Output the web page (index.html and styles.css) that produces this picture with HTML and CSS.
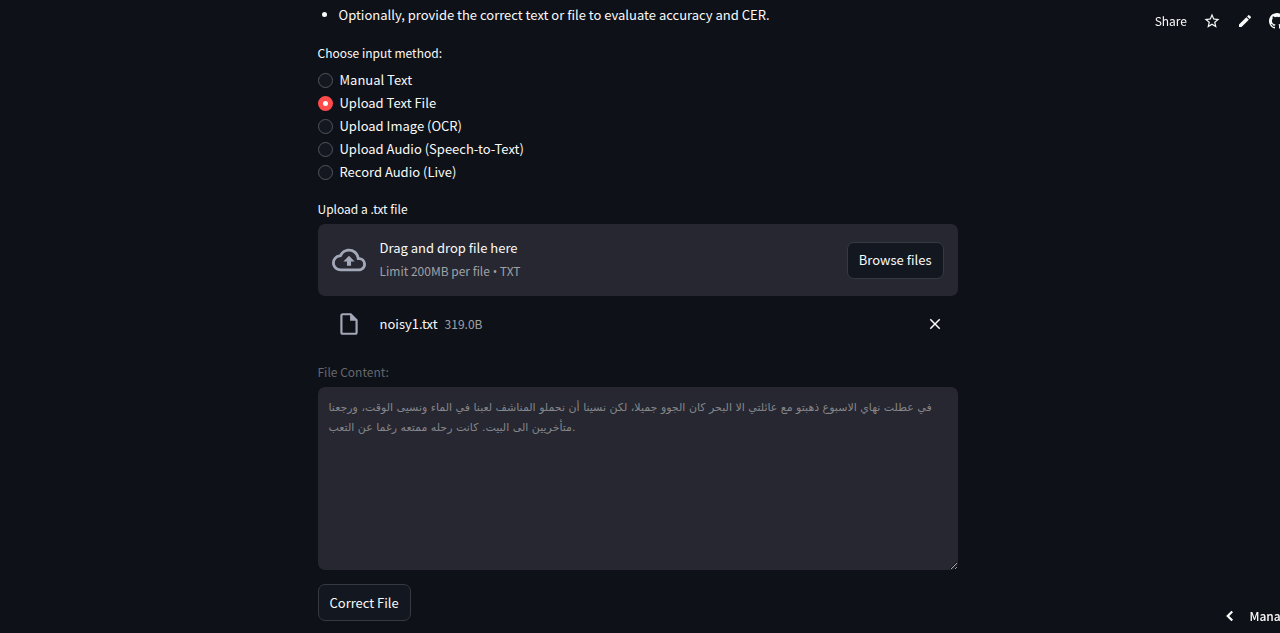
FILE: index.html
```html
<!DOCTYPE html>
<html lang="en">
<head>
    <meta charset="UTF-8">
    <meta name="viewport" content="width=device-width, initial-scale=1.0">
    <title>Text Correction</title>
    <link rel="stylesheet" href="styles.css">
</head>
<body>
    <header class="toolbar">
        <a href="#" class="share">Share</a>
        <button class="icon-btn" aria-label="Star">
            <svg width="18" height="18" viewBox="0 0 24 24"><path fill="currentColor" d="M22 9.24l-7.19-.62L12 2 9.19 8.63 2 9.24l5.46 4.73L5.82 21 12 17.27 18.18 21l-1.63-7.03L22 9.24zM12 15.4l-3.76 2.27 1-4.28-3.32-2.88 4.38-.38L12 6.1l1.71 4.04 4.38.38-3.32 2.88 1 4.28L12 15.4z"/></svg>
        </button>
        <button class="icon-btn" aria-label="Edit">
            <svg width="16" height="16" viewBox="0 0 24 24"><path fill="currentColor" d="M3 17.25V21h3.75L17.81 9.94l-3.75-3.75L3 17.25zM20.71 7.04a1 1 0 0 0 0-1.41l-2.34-2.34a1 1 0 0 0-1.41 0l-1.83 1.83 3.75 3.75 1.83-1.83z"/></svg>
        </button>
        <button class="icon-btn" aria-label="GitHub">
            <svg width="16" height="16" viewBox="0 0 16 16"><path fill="currentColor" d="M8 0C3.58 0 0 3.58 0 8c0 3.54 2.29 6.53 5.47 7.59.4.07.55-.17.55-.38 0-.19-.01-.82-.01-1.49-2.01.37-2.53-.49-2.69-.94-.09-.23-.48-.94-.82-1.13-.28-.15-.68-.52-.01-.53.63-.01 1.08.58 1.23.82.72 1.21 1.87.87 2.33.66.07-.52.28-.87.51-1.07-1.78-.2-3.64-.89-3.64-3.95 0-.87.31-1.59.82-2.15-.08-.2-.36-1.02.08-2.12 0 0 .67-.21 2.2.82a7.6 7.6 0 0 1 4 0c1.53-1.04 2.2-.82 2.2-.82.44 1.1.16 1.92.08 2.12.51.56.82 1.27.82 2.15 0 3.07-1.87 3.75-3.65 3.95.29.25.54.73.54 1.48 0 1.07-.01 1.93-.01 2.2 0 .21.15.46.55.38A8.01 8.01 0 0 0 16 8c0-4.42-3.58-8-8-8z"/></svg>
        </button>
    </header>

    <main class="content">
        <ul class="steps">
            <li>Optionally, provide the correct text or file to evaluate accuracy and CER.</li>
        </ul>

        <fieldset class="methods">
            <legend class="label">Choose input method:</legend>
            <label><input type="radio" name="method">Manual Text</label>
            <label><input type="radio" name="method" checked>Upload Text File</label>
            <label><input type="radio" name="method">Upload Image (OCR)</label>
            <label><input type="radio" name="method">Upload Audio (Speech-to-Text)</label>
            <label><input type="radio" name="method">Record Audio (Live)</label>
        </fieldset>

        <div class="label">Upload a .txt file</div>
        <section class="dropzone">
            <svg class="cloud" width="34" height="34" viewBox="0 0 24 24"><path fill="currentColor" d="M19.35 10.04A7.49 7.49 0 0 0 12 4C9.11 4 6.6 5.64 5.35 8.04A5.994 5.994 0 0 0 0 14c0 3.31 2.69 6 6 6h13c2.76 0 5-2.24 5-5 0-2.64-2.05-4.78-4.65-4.96zM19 18H6c-2.21 0-4-1.79-4-4 0-2.05 1.53-3.76 3.56-3.97l1.07-.11.5-.95A5.469 5.469 0 0 1 12 6c2.62 0 4.88 1.86 5.39 4.43l.3 1.5 1.53.11A2.98 2.98 0 0 1 22 15c0 1.65-1.35 3-3 3zM8 13h2.55v3h2.9v-3H16l-4-4z"/></svg>
            <div class="drop-text">
                <span>Drag and drop file here</span>
                <small>Limit 200MB per file <span class="dot">•</span> TXT</small>
            </div>
            <button class="btn">Browse files</button>
        </section>
        <div class="file">
            <svg class="file-icon" width="26" height="26" viewBox="0 0 24 24"><path fill="currentColor" d="M14 2H6c-1.1 0-2 .9-2 2v16c0 1.1.9 2 2 2h12c1.1 0 2-.9 2-2V8l-6-6zM6 20V4h7v5h5v11H6z"/></svg>
            <span class="file-name">noisy1.txt</span>
            <small>319.0B</small>
            <button class="icon-btn remove" aria-label="Remove file">
                <svg width="18" height="18" viewBox="0 0 24 24"><path fill="currentColor" d="M19 6.41L17.59 5 12 10.59 6.41 5 5 6.41 10.59 12 5 17.59 6.41 19 12 13.41 17.59 19 19 17.59 13.41 12z"/></svg>
            </button>
        </div>

        <label class="label muted" for="fileContent">File Content:</label>
        <textarea id="fileContent" disabled>في عطلت نهاي الاسبوع ذهبتو مع عائلتي الا البحر كان الجوو جميلا، لكن نسينا أن نحملو المناشف لعبنا في الماء ونسيى الوقت، ورجعنا
متأخريين الى البيت. كانت رحله ممتعه رغما عن التعب.</textarea>
        <button class="btn">Correct File</button>
    </main>

    <button class="manage">
        <svg width="18" height="18" viewBox="0 0 24 24"><path fill="none" stroke="currentColor" stroke-width="3" d="M15 6l-6 6 6 6"/></svg>
        Manage app
    </button>
</body>
</html>
```

FILE: styles.css
```css
* {
    box-sizing: border-box;
}
body {
    margin: 0;
    padding-right: 5px;
    min-height: 100vh;
    overflow: hidden;
    background-color: #0e1117;
    color: #fafafa;
    font-family: "Source Sans Pro", "Noto Sans CJK SC", sans-serif;
    font-size: 13px;
    line-height: 20px;
}
button {
    font: inherit;
    color: inherit;
    cursor: pointer;
}
small {
    font-size: 12px;
    color: #a0a1a7;
}
.toolbar {
    position: fixed;
    top: 11px;
    right: -5px;
    display: flex;
    align-items: center;
    gap: 16px;
}
.share {
    color: inherit;
    font-size: 12px;
    text-decoration: none;
}
.icon-btn {
    display: flex;
    padding: 0;
    border: none;
    background: none;
}
.content {
    max-width: 640px;
    margin: 0 auto;
    padding-top: 5px;
}
.steps {
    margin: 0 0 18px;
    padding-left: 21px;
}
.label {
    display: block;
    padding: 0;
    font-size: 12px;
    line-height: 20px;
    margin-bottom: 5px;
}
.muted {
    color: #65676d;
}
.methods {
    margin: 0 0 14px;
    padding: 0;
    border: none;
}
.methods .label {
    margin-bottom: 7px;
}
.methods label {
    display: flex;
    align-items: center;
    gap: 7px;
    height: 20px;
    margin-bottom: 3px;
}
.methods input {
    appearance: none;
    width: 15px;
    height: 15px;
    margin: 0;
    border: 1px solid #53555d;
    border-radius: 50%;
    background-color: #131720;
}
.methods input:checked {
    border: 5px solid #ff4b4b;
    background-color: #fff;
}
.dropzone {
    display: flex;
    align-items: center;
    padding: 14px;
    height: 72px;
    border-radius: 7px;
    background-color: #262730;
}
.cloud,
.file-icon {
    color: #a3a8b8;
}
.drop-text {
    display: flex;
    flex-direction: column;
    gap: 3px;
    flex: 1;
    margin-left: 14px;
}
.dot {
    font-family: "Open Sans", sans-serif;
}
.btn {
    height: 37px;
    padding: 0 11px;
    border: 1px solid #363941;
    border-radius: 7px;
    background-color: #131720;
}
.file {
    display: flex;
    align-items: center;
    padding: 0 14px 0 18px;
    margin: 13px 0 23px;
    height: 30px;
}
.file-name {
    margin: 0 7px 0 18px;
}
.remove {
    margin-left: auto;
}
textarea {
    display: block;
    width: 100%;
    height: 183px;
    margin-bottom: 14px;
    padding: 11px;
    border: none;
    border-radius: 7px;
    background-color: #262730;
    color: #85868b;
    font-family: "Source Sans Pro", "DejaVu Sans", sans-serif;
    font-size: 11px;
    line-height: 20px;
    resize: vertical;
}
.manage {
    position: fixed;
    right: -39px;
    bottom: 7px;
    display: flex;
    align-items: center;
    gap: 11px;
    padding: 0;
    border: none;
    background: none;
    font-size: 12px;
    font-weight: 500;
    white-space: nowrap;
}
```
